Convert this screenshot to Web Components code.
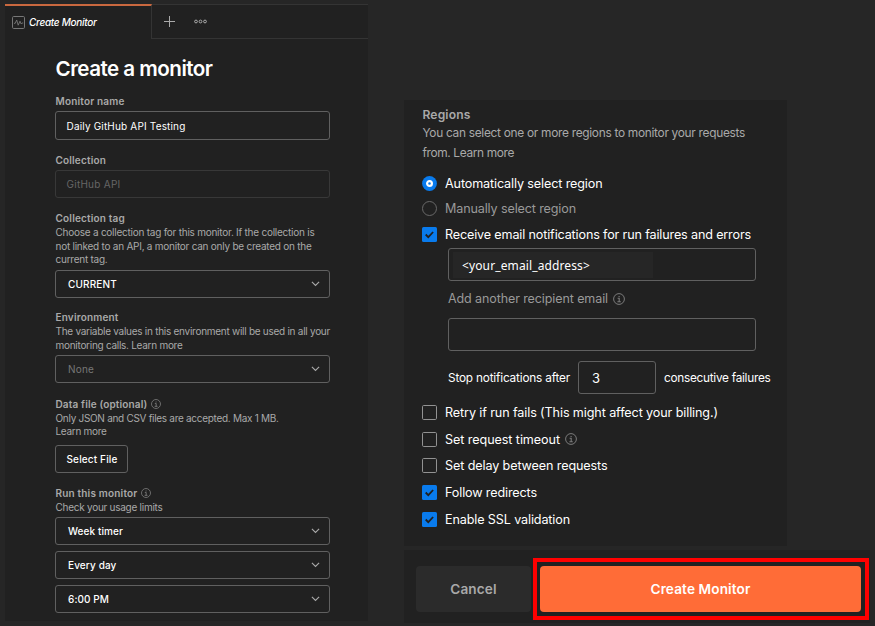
<!DOCTYPE html>
<html lang="en">
<head>
<meta charset="utf-8">
<title>Create Monitor</title>
<style>
body{margin:0;width:875px;height:626px;overflow:hidden;background:#262626;font-family:Inter,"Liberation Sans",sans-serif;color:#a9a9a9}
</style>
</head>
<body>
<monitor-app></monitor-app>
<script>
class Base extends HTMLElement{
  constructor(){super();this.attachShadow({mode:'open'});}
  draw(css,html){this.shadowRoot.innerHTML='<style>:host{display:block;box-sizing:border-box}:host *{box-sizing:border-box}'+css+'</style>'+html;}
}
/* One line of text; "w" tracks the line to a set width, "s" is the size, "lh" the line height. */
customElements.define('ui-text',class extends Base{
  connectedCallback(){
    const a=n=>this.getAttribute(n);
    this.draw(`:host{white-space:pre;flex:none;font-size:${a('s')||10}px;line-height:${a('lh')||14}px;font-weight:${a('b')||400};${a('c')?'color:'+a('c'):''}}span{display:inline-block}`,'<span><slot></slot></span>');
    const w=+a('w');
    if(w){
      const n=this.textContent.length, sp=this.shadowRoot.querySelector('span');
      const d=(w-sp.getBoundingClientRect().width)/n;
      sp.style.letterSpacing=d.toFixed(3)+'px';
    }
  }
});
customElements.define('info-icon',class extends Base{
  connectedCallback(){
    const s=this.getAttribute('size')||10;
    this.draw(`:host{flex:none;width:${s}px;height:${s}px}svg{display:block}`,
    `<svg width="${s}" height="${s}" viewBox="0 0 12 12" fill="none" stroke="#7b7b7b"><circle cx="6" cy="6" r="5.4"/><path d="M4.6 5.3H6.2V8.7M4.4 8.8H7.8M6.1 3V4.1" stroke-width="1.1"/></svg>`);
  }
});
customElements.define('field-box',class extends Base{
  connectedCallback(){
    const dim=this.hasAttribute('disabled'), sel=this.hasAttribute('select');
    this.draw(`:host{height:28px;border:1px solid ${dim?'#383838':'#606060'};border-radius:3px;display:flex;align-items:center;padding:0 9px 0 ${sel?12:10.5}px;color:${dim?'#666':'#fff'}}svg{margin-left:auto}`,
    '<slot></slot>'+(sel?'<svg width="9" height="6" viewBox="0 0 9 6" fill="none" stroke="#aaa" stroke-width="1.1"><path d="M.9 .9L4.5 4.5L8.1 .9"/></svg>':''));
  }
});
customElements.define('check-row',class extends Base{
  connectedCallback(){
    const t=this.getAttribute('type');
    const art={
      on:'<rect width="15" height="15" rx="1.5" fill="#097bed"/><path d="M3.7 7.5L6.3 10.1L11.1 5" stroke="#202020" stroke-width="1.8" fill="none"/>',
      off:'<rect x=".5" y=".5" width="14" height="14" rx="1.2" stroke="#929292" fill="none"/>',
      radio:'<circle cx="7.5" cy="7.5" r="7.4" fill="#097bed"/><circle cx="7.5" cy="7.5" r="2.4" fill="#097bed" stroke="#fff" stroke-width="2.2"/>',
      empty:'<circle cx="7.5" cy="7.5" r="7" stroke="#696969" fill="none"/>'
    }[t];
    this.draw(`:host{display:flex;align-items:center;height:20px;color:${t=='empty'?'#999':'#fff'}}svg{flex:none;margin-right:8px}::slotted(ui-text){padding-top:1px}::slotted(info-icon){margin-left:5px}`,
    `<svg width="15" height="15" viewBox="0 0 15 15">${art}</svg><slot></slot>`);
  }
});
customElements.define('tab-bar',class extends Base{
  connectedCallback(){
    this.draw(`:host{display:flex;height:35px}
    .tab{width:147px;height:35px;border-top:2px solid #c9683f;border-right:1px solid #343434;display:flex;align-items:center;padding:0 0 1px 7px;gap:4px;font-style:italic;color:#fff}
    .rest{flex:1;display:flex;align-items:center;border-top:1px solid #343434;border-bottom:1px solid #343434;padding-left:12px}
    svg{flex:none}.dots{margin-left:19px}`,
    `<div class="tab"><svg width="13" height="13" viewBox="0 0 13 13" fill="none" stroke="#777"><rect x=".5" y=".5" width="12" height="12" rx="1.2"/><path d="M2 7.3H3.2L4.7 4L6.2 9.2L8 5.2L9.2 8L10 7H11.2" stroke-width=".9"/></svg><ui-text s="10" b="500" w="67.5">Create Monitor</ui-text></div>
    <div class="rest"><svg width="11" height="11" viewBox="0 0 11 11" stroke="#aaa"><path d="M5.5 0V11M0 5.5H11"/></svg><svg class="dots" width="13" height="5" viewBox="0 0 13 5" fill="none" stroke="#aaa"><circle cx="2" cy="2.5" r="1.4"/><circle cx="6.5" cy="2.5" r="1.4"/><circle cx="11" cy="2.5" r="1.4"/></svg></div>`);
  }
});
customElements.define('monitor-form',class extends Base{
  connectedCallback(){
    this.draw(`:host{width:363px;height:617px;margin:4px 0 0 5px;background:#212121;flex:none}
    .body{width:275px;margin-left:50px;display:flex;flex-direction:column}
    .body>ui-text,.row{padding-left:.5px}
    .row{display:flex;align-items:center;gap:3px}
    .btn{width:73px;margin-top:7px}`,
    `<tab-bar></tab-bar><div class="body">
    <ui-text s="20.6" lh="28" b="600" c="#fff" w="157" style="margin-top:16px">Create a monitor</ui-text>
    <ui-text b="600" w="69" style="margin-top:11px">Monitor name</ui-text>
    <field-box style="margin-top:3px;height:29px"><ui-text w="119">Daily GitHub API Testing</ui-text></field-box>
    <ui-text b="600" w="50.5" style="margin-top:13px">Collection</ui-text>
    <field-box disabled style="margin-top:3px"><ui-text w="54">GitHub API</ui-text></field-box>
    <ui-text b="600" w="69.5" style="margin-top:13px">Collection tag</ui-text>
    <ui-text w="259">Choose a collection tag for this monitor. If the collection is</ui-text>
    <ui-text w="256">not linked to an API, a monitor can only be created on the</ui-text>
    <ui-text w="52" lh="13">current tag.</ui-text>
    <field-box select style="margin-top:4px"><ui-text b="500" w="49">CURRENT</ui-text></field-box>
    <ui-text b="600" w="63" style="margin-top:12px">Environment</ui-text>
    <ui-text w="274.5">The variable values in this environment will be used in all your</ui-text>
    <ui-text w="127">monitoring calls. Learn more</ui-text>
    <field-box select style="margin-top:3px"><ui-text w="26" c="#777">None</ui-text></field-box>
    <div class="row" style="margin-top:14px"><ui-text b="600" w="92">Data file (optional)</ui-text><info-icon></info-icon></div>
    <ui-text w="223">Only JSON and CSV files are accepted. Max 1 MB.</ui-text>
    <ui-text w="51" lh="13">Learn more</ui-text>
    <field-box class="btn"><ui-text b="500" w="51" style="padding-bottom:1px">Select File</ui-text></field-box>
    <div class="row" style="margin-top:13px"><ui-text b="600" w="82">Run this monitor</ui-text><info-icon></info-icon></div>
    <ui-text w="107">Check your usage limits</ui-text>
    <field-box select style="margin-top:3px"><ui-text b="500" w="55">Week timer</ui-text></field-box>
    <field-box select style="margin-top:6px"><ui-text b="500" w="48.5">Every day</ui-text></field-box>
    <field-box select style="margin-top:6px"><ui-text b="500" w="41">6:00 PM</ui-text></field-box>
    </div>`);
  }
});
customElements.define('monitor-options',class extends Base{
  connectedCallback(){
    this.draw(`:host{width:383px;height:446px;background:#212121;padding:5px 0 0 18px;display:flex;flex-direction:column}
    :host>ui-text{padding-left:.5px}
    .in{margin-left:26px;width:308px;height:33px;flex:none}
    .mail{background:linear-gradient(#262626,#262626) 4px 3px/200px 26px no-repeat;padding-left:13px;font-family:"Noto Sans","Open Sans",sans-serif}
    .row{display:flex;align-items:center;margin-left:26px}
    .n{width:78px;height:33px;margin:0 8px;padding-left:13px}`,
    `<ui-text s="12.1" b="600" w="48" lh="20">Regions</ui-text>
    <ui-text s="11.9" w="322.5" lh="16">You can select one or more regions to monitor your requests</ui-text>
    <ui-text s="11.9" w="91.5" lh="20" style="margin-top:2px">from. Learn more</ui-text>
    <check-row type="radio" style="margin-top:10px"><ui-text s="12.6" w="157.5" lh="20">Automatically select region</ui-text></check-row>
    <check-row type="empty" style="margin-top:5px"><ui-text s="12.6" w="131" lh="20">Manually select region</ui-text></check-row>
    <check-row type="on" style="margin-top:6px"><ui-text s="12.6" w="306" lh="20">Receive email notifications for run failures and errors</ui-text></check-row>
    <field-box class="in mail" style="margin-top:4px"><ui-text s="12" w="128" lh="20" style="padding-top:2px">&lt;your_email_address&gt;</ui-text></field-box>
    <div class="row" style="margin-top:8px;gap:5px"><ui-text s="12.5" w="160" lh="20" c="#999">Add another recipient email</ui-text><info-icon size="12"></info-icon></div>
    <field-box class="in" style="margin-top:9px"></field-box>
    <div class="row" style="margin-top:10px;color:#fff"><ui-text s="11.8" w="122" lh="20">Stop notifications after</ui-text><field-box class="n"><ui-text s="13" lh="20">3</ui-text></field-box><ui-text s="11.8" w="106.5" lh="20">consecutive failures</ui-text></div>
    <check-row type="off" style="margin-top:8px"><ui-text s="12.6" w="273" lh="20">Retry if run fails (This might affect your billing.)</ui-text></check-row>
    <check-row type="off" style="margin-top:7px"><ui-text s="12.6" w="115" lh="20">Set request timeout</ui-text><info-icon size="12"></info-icon></check-row>
    <check-row type="off" style="margin-top:6px"><ui-text s="12.6" w="162.5" lh="20">Set delay between requests</ui-text></check-row>
    <check-row type="on" style="margin-top:7px"><ui-text s="12.6" w="92" lh="20">Follow redirects</ui-text></check-row>
    <check-row type="on" style="margin-top:7px"><ui-text s="12.6" w="125" lh="20">Enable SSL validation</ui-text></check-row>`);
  }
});
customElements.define('action-bar',class extends Base{
  connectedCallback(){
    this.draw(`:host{display:flex;align-items:center;width:466px;height:73px;margin-top:4px;background:#212121;padding-left:12px;padding-top:5px}
    .b{height:46px;border-radius:4px;display:flex;align-items:center;justify-content:center}
    .cancel{width:115px;background:#2b2b2b;margin-right:2px}
    .ring{width:336px;flex:none;height:62px;border:4px solid #f00;padding:4px 4px 4px 3px}
    .go{background:#ff6c37;color:#fff}`,
    `<div class="b cancel"><ui-text s="13.6" b="600" w="46.5" lh="20">Cancel</ui-text></div><div class="ring"><div class="b go"><ui-text s="13.6" b="600" w="100" lh="20">Create Monitor</ui-text></div></div>`);
  }
});
customElements.define('monitor-app',class extends Base{
  connectedCallback(){
    this.draw(`:host{display:flex;height:626px}.right{margin:100px 0 0 36px}`,
    `<monitor-form></monitor-form><div class="right"><monitor-options></monitor-options><action-bar></action-bar></div>`);
  }
});
</script>
</body>
</html>
